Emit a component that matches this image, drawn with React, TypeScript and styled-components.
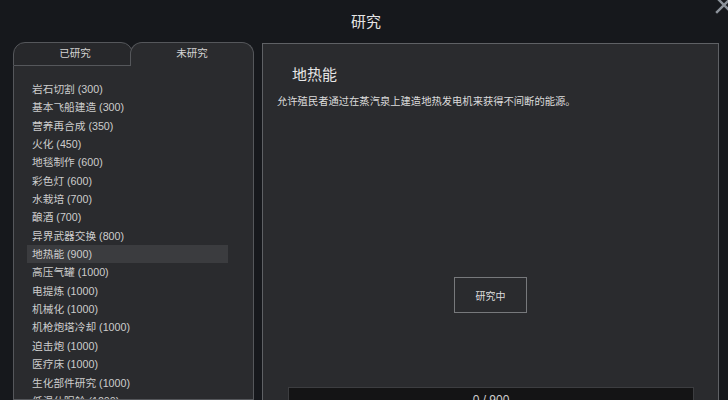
import * as React from 'react'
import styled, { createGlobalStyle } from 'styled-components'

const { useState } = React

const GlobalStyle = createGlobalStyle`
  html, body {
    margin: 0;
    padding: 0;
    background: #16181c;
  }
  body {
    font-family: "Liberation Sans", "Noto Sans CJK SC", sans-serif;
    color: #d8d8d8;
  }
`

type Project = { name: string; cost: number }

const projects: Project[] = [
  { name: '岩石切割', cost: 300 },
  { name: '基本飞船建造', cost: 300 },
  { name: '营养再合成', cost: 350 },
  { name: '火化', cost: 450 },
  { name: '地毯制作', cost: 600 },
  { name: '彩色灯', cost: 600 },
  { name: '水栽培', cost: 700 },
  { name: '酿酒', cost: 700 },
  { name: '异界武器交换', cost: 800 },
  { name: '地热能', cost: 900 },
  { name: '高压气罐', cost: 1000 },
  { name: '电提炼', cost: 1000 },
  { name: '机械化', cost: 1000 },
  { name: '机枪炮塔冷却', cost: 1000 },
  { name: '迫击炮', cost: 1000 },
  { name: '医疗床', cost: 1000 },
  { name: '生化部件研究', cost: 1000 },
  { name: '低温休眠舱', cost: 1200 },
]

export default function App() {
  const [tab, setTab] = useState<'done' | 'todo'>('todo')
  const [selected, setSelected] = useState('地热能')
  const current = projects.find(p => p.name === selected) || projects[9]

  return (
    <>
      <GlobalStyle />
      <Screen>
        <Header>
          <span />
          <Title>研究</Title>
          <CloseButton aria-label="close">
            <svg width="18" height="18" viewBox="0 0 18 18">
              <path d="M2 2 L16 16 M16 2 L2 16" stroke="#8d939b" strokeWidth="2.4" strokeLinecap="square" />
            </svg>
          </CloseButton>
        </Header>
        <Body>
          <LeftColumn>
            <TabRow>
              <Tab $active={tab === 'done'} $first onClick={() => setTab('done')}>已研究</Tab>
              <Tab $active={tab === 'todo'} onClick={() => setTab('todo')}>未研究</Tab>
            </TabRow>
            <ListPanel>
              {projects.map(p => (
                <ListItem
                  key={p.name}
                  $selected={p.name === selected}
                  onClick={() => setSelected(p.name)}
                >
                  {p.name} ({p.cost})
                </ListItem>
              ))}
            </ListPanel>
          </LeftColumn>
          <DetailPanel>
            <DetailTitle>{current.name}</DetailTitle>
            <DetailText>允许殖民者通过在蒸汽泉上建造地热发电机来获得不间断的能源。</DetailText>
            <ActionButton>研究中</ActionButton>
            <Progress>0 / {current.cost}</Progress>
          </DetailPanel>
        </Body>
      </Screen>
    </>
  )
}

const Screen = styled.div`
  width: 728px;
  height: 400px;
  overflow: hidden;
  background: #16181c;
  display: flex;
  flex-direction: column;
`

const Header = styled.div`
  height: 42px;
  display: grid;
  grid-template-columns: 1fr auto 1fr;
  align-items: center;
  flex-shrink: 0;
`

const Title = styled.div`
  font-size: 15px;
  color: #e4e4e4;
  padding: 0 0 1px 4px;
`

const CloseButton = styled.div`
  justify-self: end;
  align-self: start;
  margin-top: -4px;
  margin-right: -5px;
  line-height: 0;
`

const Body = styled.div`
  flex: 1;
  display: flex;
  gap: 8px;
  padding: 0 9px 0 13px;
  min-height: 0;
`

const LeftColumn = styled.div`
  width: 241px;
  display: flex;
  flex-direction: column;
`

const TabRow = styled.div`
  display: flex;
  height: 24px;
  flex-shrink: 0;
`

const Tab = styled.div<{ $active: boolean; $first?: boolean }>`
  box-sizing: border-box;
  width: ${p => (p.$first ? '120px' : '124px')};
  margin-left: ${p => (p.$first ? '0' : '-3px')};
  position: relative;
  z-index: ${p => (p.$active ? 2 : 1)};
  height: 24px;
  border: 1px solid #55575b;
  border-bottom: ${p => (p.$active ? 'none' : '1px solid #55575b')};
  border-radius: 12px 12px 0 0;
  background: ${p => (p.$active ? '#2a2b2e' : '#27282b')};
  color: #d4d4d4;
  font-size: 10.5px;
  text-align: center;
  line-height: 20px;
  padding-left: ${p => (p.$first ? '4px' : '0')};
  cursor: pointer;
`

const ListPanel = styled.div`
  flex: 1;
  background: #2a2b2e;
  border: 1px solid #55575b;
  border-top: none;
  padding: 14px 25px 0 13px;
  overflow: hidden;
`

const ListItem = styled.div<{ $selected: boolean }>`
  height: 18.35px;
  line-height: 18.35px;
  padding-left: 5px;
  font-size: 10.7px;
  color: #cdcdcd;
  white-space: nowrap;
  background: ${p => (p.$selected ? '#3b3c3f' : 'transparent')};
  cursor: pointer;
`

const DetailPanel = styled.div`
  flex: 1;
  margin-top: 1px;
  background: #2a2b2e;
  border: 1px solid #5f6165;
  border-bottom: none;
  display: flex;
  flex-direction: column;
  align-items: flex-start;
  padding: 0 0 0 14px;
  overflow: hidden;
`

const DetailTitle = styled.div`
  flex-shrink: 0;
  margin: 21px 0 0 15px;
  font-size: 15px;
  line-height: 20px;
  color: #e6e6e6;
`

const DetailText = styled.div`
  flex-shrink: 0;
  margin-top: 10px;
  font-size: 10.3px;
  line-height: 14px;
  color: #dcdcdc;
`

const ActionButton = styled.div`
  flex-shrink: 0;
  align-self: center;
  margin: 168px 0 0 -14px;
  box-sizing: border-box;
  width: 73px;
  height: 36px;
  border: 1px solid #77797c;
  display: flex;
  align-items: center;
  justify-content: center;
  font-size: 10px;
  color: #dedede;
`

const Progress = styled.div`
  flex-shrink: 0;
  align-self: stretch;
  margin: 74px 24px 0 11px;
  height: 24px;
  background: #141415;
  border: 1px solid #3c3d40;
  text-align: center;
  font-size: 12px;
  line-height: 24px;
  color: #cfcfcf;
`
